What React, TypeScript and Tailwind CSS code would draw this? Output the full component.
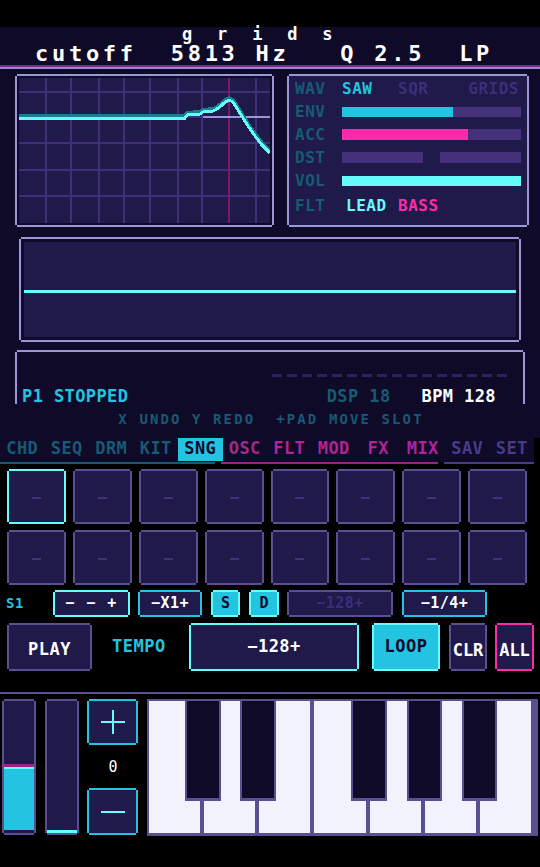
import React from "react";

// 2px pixel-art frames: offset-only shadows leave the four corner pixels empty
const RING_LAV = "shadow-[0_-2px_0_0_#9b96d6,0_2px_0_0_#9b96d6,-2px_0_0_0_#9b96d6,2px_0_0_0_#9b96d6]";
const RING_PUR = "shadow-[0_-2px_0_0_#5a4f90,0_2px_0_0_#5a4f90,-2px_0_0_0_#5a4f90,2px_0_0_0_#5a4f90]";
const RING_CYAN = "shadow-[0_-2px_0_0_#22c4e2,0_2px_0_0_#22c4e2,-2px_0_0_0_#22c4e2,2px_0_0_0_#22c4e2]";
const RING_AQUA = "shadow-[0_-2px_0_0_#66fcfc,0_2px_0_0_#66fcfc,-2px_0_0_0_#66fcfc,2px_0_0_0_#66fcfc]";
const RING_PINK = "shadow-[0_-2px_0_0_#ff2aa8,0_2px_0_0_#ff2aa8,-2px_0_0_0_#ff2aa8,2px_0_0_0_#ff2aa8]";
const RING_OPEN = "shadow-[0_-2px_0_0_#9b96d6,-2px_0_0_0_#9b96d6,2px_0_0_0_#9b96d6]";

function Framed({
  ring,
  outer = "",
  inner = "",
  children,
}: {
  ring: string;
  outer?: string;
  inner?: string;
  children?: React.ReactNode;
}) {
  return (
    <div className={"p-[2px] shrink-0 " + outer}>
      <div className={"h-full w-full " + ring + " " + inner}>{children}</div>
    </div>
  );
}

const GRID_X = [26, 51, 79, 104, 130, 158, 182, 236];
const GRID_Y = [13, 38, 64, 91, 117];
const CURVE: [number, number][] = [
  [0, 40],
  [166, 40],
  [168, 37],
  [181, 36],
  [184, 34],
  [194, 33],
  [198, 31],
  [202, 28],
  [205, 25],
  [210, 22],
  [214, 24],
  [219, 32],
  [224, 40],
  [229, 48],
  [236, 58],
  [243, 67],
  [251, 75],
];

function FilterGraph() {
  const pts = CURVE.map(([x, y]) => `${x},${y}`).join(" ");
  const shade = CURVE.map(([x, y]) => `${x},${y - 2}`).join(" ");
  return (
    <svg width="251" height="145" viewBox="0 0 251 145" shapeRendering="crispEdges" className="block">
      <rect x="0" y="0" width="251" height="145" fill="#1f1a4a" />
      {GRID_X.map((x) => (
        <rect key={"v" + x} x={x} y="0" width="2" height="145" fill="#3f2e7a" />
      ))}
      {GRID_Y.map((y) => (
        <rect key={"h" + y} x="0" y={y} width="251" height="2" fill="#3f2e7a" />
      ))}
      <rect x="209" y="0" width="2" height="145" fill="#7a1a68" />
      <rect x="184" y="38" width="67" height="2" fill="#9b96d6" />
      <polyline points={shade} fill="none" stroke="#17808f" strokeWidth="4" />
      <polyline points={pts} fill="none" stroke="#66fcfc" strokeWidth="3" />
    </svg>
  );
}

function ParamRow({ label, children, extra = "" }: { label: string; children: React.ReactNode; extra?: string }) {
  return (
    <div className={"flex h-[23px] items-center " + extra}>
      <span className="w-[47px] shrink-0 text-[#165a73]">{label}</span>
      <div className="flex flex-1 items-center">{children}</div>
    </div>
  );
}

const TAB_GROUPS = [
  { items: ["CHD", "SEQ", "DRM", "KIT", "SNG"], color: "text-[#165a73]" },
  { items: ["OSC", "FLT", "MOD", "FX", "MIX"], color: "text-[#b0239a]" },
  { items: ["SAV", "SET"], color: "text-[#4a3a8a]" },
];

function Tabs() {
  return (
    <div className="bg-black">
      <div className="flex h-[24px] w-[534px] bg-[#0e0a28] text-[17px] tracking-[0.5px]">
        {TAB_GROUPS.map((g) =>
          g.items.map((t) => {
            const active = t === "SNG";
            return (
              <div
                key={t}
                className={
                  "flex h-[23px] w-[44.5px] items-center justify-center pb-[2px] " +
                  (active ? "bg-[#22c4e2] text-[#0e0a28]" : t === "OSC" ? "text-[#a02a8e]" : g.color)
                }
              >
                {t}
              </div>
            );
          })
        )}
      </div>
      <div className="flex h-[2px]">
        <div className="w-[215px] bg-[#165a73]" />
        <div className="ml-[6px] w-[217px] bg-[#a0208a]" />
        <div className="ml-[6px] w-[90px] bg-[#4a3a8a]" />
      </div>
    </div>
  );
}

function Pad({ selected }: { selected?: boolean }) {
  return (
    <Framed
      ring={selected ? RING_AQUA : RING_PUR}
      outer="h-[55px]"
      inner="bg-[#1f1a4a] flex items-center justify-center pt-[3px]"
    >
      <div className="h-[2px] w-[9px] bg-[#45307a]" />
    </Framed>
  );
}

function Keyboard() {
  const blacks = [
    "left-[38px] w-[36px]",
    "left-[93px] w-[36px]",
    "left-[204px] w-[36px]",
    "left-[260px] w-[35px]",
    "left-[315px] w-[35px]",
  ];
  return (
    <div className="relative ml-[9px] flex h-[137px] w-[391px] shrink-0 gap-[4px] bg-[#5a4f90] pb-[3px] pl-[2px] pr-[7px] pt-[2px]">
      {Array.from({ length: 7 }).map((_, i) => (
        <div key={i} className="flex-1 bg-[#f2f2fc]" />
      ))}
      {blacks.map((c) => (
        <div
          key={c}
          className={"absolute top-0 h-[102px] border-x-2 border-b-[3px] border-t-2 border-[#5a4f90] bg-[#0e0a28] " + c}
        />
      ))}
    </div>
  );
}

export default function App() {
  return (
    <div className="h-[867px] w-[540px] overflow-hidden bg-black font-bold text-white [font-family:'DejaVu_Sans_Mono','Liberation_Mono',monospace]">
      <div className="h-[27px]" />

      {/* title bar */}
      <div className="h-[38px] bg-[#0e0a28]">
        <div className="h-[15px] whitespace-pre pl-[182px] text-[17px] leading-[15px] tracking-[7.3px]">g r i d s</div>
        <div className="h-[23px] whitespace-pre pl-[35px] text-[22px] leading-[24px] tracking-[3.72px]">
          cutoff  5813 Hz   Q 2.5  LP
        </div>
      </div>
      <div className="h-[2px] bg-[#7b2a82]" />
      <div className="h-[2px] bg-[#9a86d6]" />

      <div className="bg-[#0e0a28] pt-[5px]">
        {/* filter response + voice parameters */}
        <div className="flex pl-[15px]">
          <Framed ring={RING_LAV} outer="w-[259px] h-[153px]" inner="p-[2px] bg-[#0e0a28]">
            <FilterGraph />
          </Framed>
          <Framed ring={RING_LAV} outer="ml-[13px] w-[242px] h-[153px]" inner="bg-[#1f1a4a] pl-[6px] pr-[6px] pt-[1px] text-[16px] tracking-[0.5px]">
            <ParamRow label="WAV">
              <span className="w-[56px] text-[#22c4e2]">SAW</span>
              <span className="text-[#3b2f7a]">SQR</span>
              <span className="ml-auto mr-[2px] text-[#3b2f7a]">GRIDS</span>
            </ParamRow>
            <ParamRow label="ENV">
              <div className="h-[10px] w-full bg-[#45307a]">
                <div className="h-full w-[111px] bg-[#22c4e2]" />
              </div>
            </ParamRow>
            <ParamRow label="ACC">
              <div className="h-[11px] w-full bg-[#45307a]">
                <div className="h-full w-[126px] bg-[#ff2aa8]" />
              </div>
            </ParamRow>
            <ParamRow label="DST">
              <div className="h-[11px] w-[81px] bg-[#45307a]" />
              <div className="ml-[17px] h-[11px] w-[81px] bg-[#45307a]" />
            </ParamRow>
            <ParamRow label="VOL">
              <div className="h-[10px] w-full bg-[#66fcfc]" />
            </ParamRow>
            <ParamRow label="FLT" extra="mt-[2px]">
              <span className="w-[56px] pl-[4px] text-[#66fcfc]">LEAD</span>
              <span className="text-[#ff2aa8]">BASS</span>
            </ParamRow>
          </Framed>
        </div>

        {/* oscilloscope */}
        <Framed ring={RING_LAV} outer="ml-[19px] mt-[10px] w-[502px] h-[105px]" inner="p-[3px] bg-[#0e0a28]">
          <div className="h-full w-full bg-[#1f1a4a] pt-[48px]">
            <div className="h-[3px] w-full bg-[#66fcfc]" />
          </div>
        </Framed>

        {/* transport status */}
        <div className="ml-[15px] mt-[8px] w-[510px] px-[2px] pt-[2px]">
          <div className={"h-[52px] w-full " + RING_OPEN}>
            <div className="flex h-[25px] items-end pl-[255px]">
              <div className="flex h-[3px] gap-[5px]">
                {Array.from({ length: 16 }).map((_, i) => (
                  <div key={i} className="h-[3px] w-[10px] bg-[#2a2262]" />
                ))}
              </div>
            </div>
            <div className="flex h-[27px] items-center pl-[5px] pr-[27px] pt-[12px] text-[17px] tracking-[0.4px]">
              <span className="text-[#22c4e2]">P1 STOPPED</span>
              <span className="ml-auto text-[#165a73]">DSP 18</span>
              <span className="ml-[31px]">BPM 128</span>
            </div>
          </div>
        </div>

        <div className="flex h-[30px] items-center justify-center whitespace-pre pl-[2px] text-[14px] tracking-[2.1px] text-[#165a73]">
          X UNDO Y REDO  +PAD MOVE SLOT
        </div>
        <div className="h-[4px]" />
      </div>

      <Tabs />

      {/* song slots */}
      <div className="ml-[7px] mt-[5px] grid w-[520px] grid-cols-8 gap-x-[7px] gap-y-[6px]">
        {Array.from({ length: 16 }).map((_, i) => (
          <Pad key={i} selected={i === 0} />
        ))}
      </div>

      {/* slot controls */}
      <div className="mt-[5px] flex h-[27px] items-center pl-[6px] text-[15px] tracking-[1.5px]">
        <span className="w-[47px] text-[14px] tracking-[0.5px] text-[#22c4e2]">S1</span>
        <Framed ring={RING_AQUA} outer="w-[77px] h-[27px]" inner="bg-[#1f1a4a] flex items-center justify-center whitespace-pre">
          − − +
        </Framed>
        <Framed ring={RING_CYAN} outer="ml-[8px] w-[64px] h-[27px]" inner="bg-[#1f1a4a] flex items-center justify-center tracking-[0.5px]">
          −X1+
        </Framed>
        <Framed ring={RING_AQUA} outer="ml-[9px] w-[29px] h-[27px]" inner="bg-[#22c4e2] text-[#0e0a28] flex items-center justify-center tracking-[0px]">
          S
        </Framed>
        <Framed ring={RING_AQUA} outer="ml-[9px] w-[30px] h-[27px]" inner="bg-[#22c4e2] text-[#0e0a28] flex items-center justify-center tracking-[0px]">
          D
        </Framed>
        <Framed ring={RING_PUR} outer="ml-[8px] w-[106px] h-[27px]" inner="bg-[#1f1a4a] text-[#3b2f7a] flex items-center justify-center tracking-[0.5px]">
          −128+
        </Framed>
        <Framed ring={RING_CYAN} outer="ml-[9px] w-[85px] h-[27px]" inner="bg-[#1f1a4a] flex items-center justify-center tracking-[0.5px]">
          −1/4+
        </Framed>
      </div>

      <div className="mt-[6px] flex h-[48px] items-center pl-[7px] text-[17px] tracking-[0.5px]">
        <Framed ring={RING_PUR} outer="w-[85px] h-[48px]" inner="bg-[#1f1a4a] flex items-center justify-center pt-[6px]">
          PLAY
        </Framed>
        <span className="ml-[20px] w-[77px] text-[#22c4e2]">TEMPO</span>
        <Framed ring={RING_AQUA} outer="w-[170px] h-[48px]" inner="bg-[#1f1a4a] flex items-center justify-center">
          −128+
        </Framed>
        <Framed ring={RING_AQUA} outer="ml-[13px] w-[68px] h-[48px]" inner="bg-[#22c4e2] text-[#0e0a28] flex items-center justify-center">
          LOOP
        </Framed>
        <Framed ring={RING_PUR} outer="ml-[9px] w-[38px] h-[48px]" inner="bg-[#1f1a4a] flex items-center justify-center pt-[7px] tracking-[0px]">
          CLR
        </Framed>
        <Framed ring={RING_PINK} outer="ml-[8px] w-[39px] h-[48px]" inner="bg-[#1f1a4a] flex items-center justify-center pt-[7px] tracking-[0px]">
          ALL
        </Framed>
      </div>

      <div className="mt-[21px] h-[2px] bg-[#5a4f90]" />

      {/* performance strip */}
      <div className="mt-[5px] flex items-start pl-[2px]">
        <Framed ring={RING_PUR} outer="w-[34px] h-[136px]" inner="flex flex-col">
          <div className="h-[63px] bg-[#1f1a4a]" />
          <div className="h-[3px] bg-[#a0208a]" />
          <div className="h-[2px] bg-[#66fcfc]" />
          <div className="h-[61px] bg-[#22c4e2]" />
          <div className="h-[3px] bg-[#1f1a4a]" />
        </Framed>
        <Framed ring={RING_PUR} outer="ml-[9px] w-[34px] h-[136px]" inner="flex flex-col bg-[#1f1a4a]">
          <div className="h-[129px]" />
          <div className="h-[3px] bg-[#66fcfc]" />
        </Framed>
        <div className="ml-[8px] flex w-[51px] shrink-0 flex-col">
          <Framed ring={RING_CYAN} outer="h-[46px]" inner="bg-[#1f1a4a] flex items-center justify-center">
            <svg width="24" height="24" viewBox="0 0 24 24" shapeRendering="crispEdges">
              <rect x="0" y="11" width="24" height="2" fill="#66fcfc" />
              <rect x="11" y="0" width="2" height="24" fill="#66fcfc" />
            </svg>
          </Framed>
          <div className="flex h-[43px] items-center justify-center pl-[1px] pt-[1px] text-[15px] font-normal">0</div>
          <Framed ring={RING_CYAN} outer="h-[47px]" inner="bg-[#1f1a4a] flex items-center justify-center">
            <svg width="24" height="2" viewBox="0 0 24 2" shapeRendering="crispEdges">
              <rect x="0" y="0" width="24" height="2" fill="#66fcfc" />
            </svg>
          </Framed>
        </div>
        <Keyboard />
      </div>
    </div>
  );
}
